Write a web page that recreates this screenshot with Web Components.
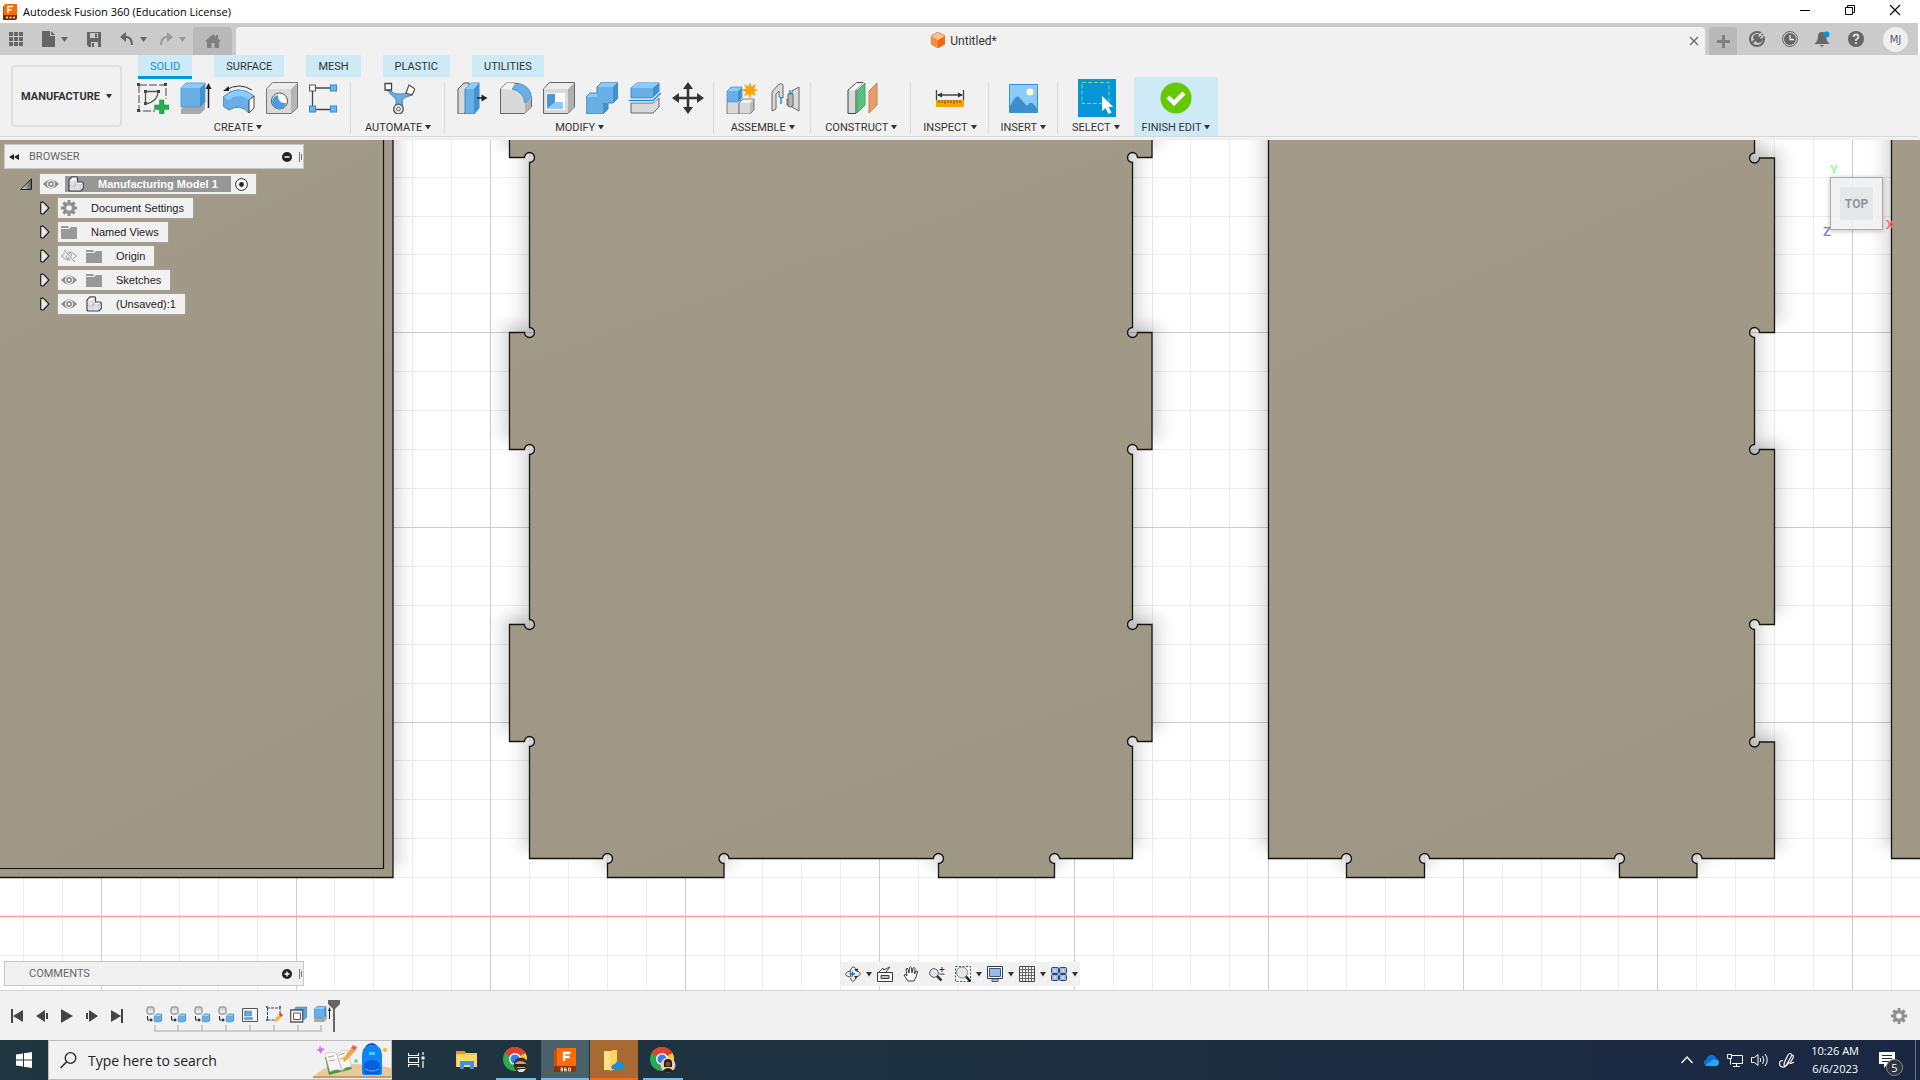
<!DOCTYPE html>
<html lang="en">
<head>
<meta charset="utf-8">
<title>Autodesk Fusion 360 (Education License)</title>
<style>
  html, body { margin: 0; height: 100%; overflow: hidden; }
  body { font-family: Roboto, "Liberation Sans", sans-serif; font-size: 11px; color: #333; }
</style>
</head>
<body>
<fusion-app></fusion-app>
<script>
const cube = (x, y, s, d, f = '#69aee5', t = '#8accff', r = '#4193cf', st = '#4a98d3') =>
  `<path d="M${x} ${y + d}h${s}v${s}h${-s}z" fill="${f}"/><path d="M${x} ${y + d}l${d} ${-d}h${s}l${-d} ${d}z" fill="${t}"/><path d="M${x + s} ${y + d}l${d} ${-d}v${s}l${-d} ${d}z" fill="${r}"/><path d="M${x} ${y + d}l${d} ${-d}h${s}v${s}l${-d} ${d}h${-s}z" fill="none" stroke="${st}" stroke-width=".8"/>`;
const sq = (x, y, c) => `<rect x="${x}" y="${y}" width="6" height="6" fill="${c}" stroke="${c === '#fff' ? '#555' : '#2f8bcf'}" stroke-width="1"/>`;
const chrome = (who) => `<circle cx="12" cy="12" r="12" fill="#2da94f"/><path d="M12 12L1.600 6A12 12 0 0 1 22.400 6z" fill="#e33e2f"/><path d="M12 12L22.400 6A12 12 0 0 1 12 24L17 14z" fill="#fcc934"/><path d="M12 6.500h10.600L22 5H8z" fill="#e33e2f"/><circle cx="12" cy="12" r="6" fill="#fff"/><circle cx="12" cy="12" r="4.600" fill="#3b7ded"/>${who}`;
const component = `<path d="M1 15V4L4 .8h4.500q1 0 1 1V6H14q1.500 0 1.500 1v5.500L13 15z" fill="#fff"/><path d="M1.500 4.500H6.500v5h-5zM1.500 10.500h5v4h-5zM8 9.500h4.500v5H8z" fill="#dde0e4"/><path d="M7 15V4.500L9.500 2M7 9h6l2.300-2M13 9v6M1 10h6M7 9l2.500-3" fill="none" stroke="#aab" stroke-width=".8"/><path d="M1 14.200V4L4 .8h4.500q1 0 1 1V6H14q1.300 0 1.300 1v5.500L13 15H1.800z" fill="none" stroke="#3f4550" stroke-width="1.200"/>`;
const eye = `<path d="M0 8Q8-1 16 8Q8 17 0 8z" fill="#8f8f8f"/><circle cx="8" cy="8" r="4" fill="#f1f1f1"/><circle cx="8" cy="8" r="2.900" fill="#8f8f8f"/><circle cx="8" cy="8" r="1.200" fill="#f1f1f1"/>`;
const gear = `<g fill="#8f8f8f"><path d="M6.500 0h3v16h-3z"/><path d="M6.500 0h3v16h-3z" transform="rotate(45 8 8)"/><path d="M6.500 0h3v16h-3z" transform="rotate(90 8 8)"/><path d="M6.500 0h3v16h-3z" transform="rotate(135 8 8)"/><circle cx="8" cy="8" r="6"/></g><circle cx="8" cy="8" r="2.800" fill="#f1f1f1"/>`;
const feature = `<rect x="1" y="1" width="7" height="7" rx="1.500" fill="#e8e8e8" stroke="#777"/><path d="M1 3h7" stroke="#999" stroke-width=".6"/><path d="M1.500 10v4h4" fill="none" stroke="#222"/><path d="M4.500 12l2.500 2-2.500 2z" fill="#222"/>` + cube(8.500, 8, 6, 1.800);

const ICONS = {
  fusion: [14, 16, `<path d="M1 2q0-2 2-2h11v11H1z" fill="#ff6b00"/><path d="M0 3l1-2v10H0z" fill="#c44a00"/><path d="M0 11h14v3q0 2-2 2H0z" fill="#7b2c05"/><path d="M5 9V2.500h5M5 5.700h4" stroke="#fff" stroke-width="1.600" fill="none"/><path d="M3 13.500h2M6.500 13.500h2M10 13.500h2" stroke="#fff" stroke-width="1.300"/>`],
  min: [12, 12, `<path d="M1 6.500h10" stroke="#000"/>`],
  restore: [12, 12, `<path d="M1.500 3.500h7v7h-7zM3.500 3V1.500h7v7H9" fill="none" stroke="#000"/>`],
  close: [12, 12, `<path d="M1 1l10 10M11 1L1 11" stroke="#000" stroke-width="1.100"/>`],
  tabx: [12, 12, `<path d="M2 2l8 8M10 2l-8 8" stroke="#666" stroke-width="1.300"/>`],
  apps: [14, 14, `<path d="M0 0h4v4H0zM5 0h4v4H5zM10 0h4v4h-4zM0 5h4v4H0zM5 5h4v4H5zM10 5h4v4h-4zM0 10h4v4H0zM5 10h4v4H5zM10 10h4v4h-4z" fill="#666"/>`],
  file: [13, 16, `<path d="M0 0h8v5h5v11H0zM9 0l4 4H9z" fill="#666"/>`],
  save: [14, 15, `<path d="M0 0h14v15H2l-2-2z" fill="#666"/><path d="M3 1h8v6H3zM4 10h7v5H4z" fill="#cbcbcb"/><path d="M9 1.500v4" stroke="#666" stroke-width="2"/><path d="M6 11v4" stroke="#666" stroke-width="2"/><path d="M3 6.500h8" stroke="#666"/>`],
  undo: [14, 14, `<path d="M1 5h6q5 1 5 8" fill="none" stroke="#666" stroke-width="2"/><path d="M0 5l6-5v10z" fill="#666"/>`],
  redo: [14, 14, `<path d="M13 5H7q-5 1-5 8" fill="none" stroke="#999" stroke-width="2"/><path d="M14 5L8 0v10z" fill="#999"/>`],
  home: [16, 14, `<path d="M8 0L0 7.500h2V14h4.500V9h3v5H14V7.500h2L13 4.500V1h-2v2z" fill="#808080"/>`],
  down: [7, 5, `<path d="M0 0h7L3.500 5z" fill="#666"/>`],
  downl: [7, 5, `<path d="M0 0h7L3.500 5z" fill="#999"/>`],
  downk: [6, 5, `<path d="M0 0h6L3 4.500z" fill="#333"/>`],
  model: [14, 16, `<path d="M7 0l7 4-7 4-7-4z" fill="#ffc093"/><path d="M0 4l7 4v8l-7-4z" fill="#ff8b3d"/><path d="M14 4L7 8v8l7-4z" fill="#f96800"/><path d="M7 0l7 4v8l-7 4-7-4V4z" fill="none" stroke="#c9793f" stroke-width=".8"/>`],
  plus: [13, 13, `<path d="M6.500 0v13M0 6.500h13" stroke="#808080" stroke-width="3"/>`],
  extensions: [16, 16, `<circle cx="8" cy="8" r="7" fill="none" stroke="#666" stroke-width="2"/><path d="M2 13l4-4M5 7l4 4q4 0 4-4L9 4Q5 4 5 7z" stroke="#666" stroke-width="1.800" fill="#666"/><path d="M9.500 5.500L15 0M11.500 7.500L16 3" stroke="#cbcbcb" stroke-width="1.600"/>`],
  clock: [16, 16, `<circle cx="8" cy="8" r="7.500" fill="none" stroke="#666"/><circle cx="8" cy="8" r="6" fill="#666"/><path d="M8 4v4.500h4" fill="none" stroke="#eee" stroke-width="1.300"/>`],
  bell: [16, 16, `<path d="M7 1q4 0 4 4 0 5 3 7v1H0v-1q3-2 3-7 0-4 4-4zM5 14h4l-2 2z" fill="#666"/><circle cx="11.500" cy="3.500" r="3" fill="#0696d7"/>`],
  help: [16, 16, `<circle cx="8" cy="8" r="8" fill="#666"/><path d="M5.500 6q0-2.500 2.500-2.500T10.500 6Q10.500 7.500 8 8.500V10" fill="none" stroke="#ddd" stroke-width="1.800"/><path d="M7 11.300h2v1.800H7z" fill="#ddd"/>`],
  sketch: [32, 32, `<g fill="none" stroke="#444" stroke-dasharray="8 2"><path d="M2 3h27v14M2 3v26h16" /></g><g fill="#444"><path d="M0 1h3v3H0zM27 1h3v3h-3zM0 27h3v3H0zM7 8h3v3H7zM20 8h3v3h-3zM7 20h3v3H7z"/></g><path d="M9 9.500h11M8.500 10v11M21 10q0 9-12 12" fill="none" stroke="#555" stroke-width="1.300"/><path d="M22.500 18h4.500v5h5v4.500h-5V32h-4.500v-4.500h-5V23h5z" fill="#27ae4e" stroke="#14883a" stroke-width=".5"/>`],
  extrude: [32, 32, `<path d="M1 27l4-3h16l4-5v8l-5 5H1z" fill="#a8a8a8"/>` + cube(1, 1, 19, 5) + `<path d="M28.500 5v21" stroke="#222" stroke-width="1.500"/><path d="M28.500 1l3 6h-6z" fill="#222"/>`],
  revolve: [32, 32, `<path d="M0 15q15-14 31-1l-5 4v13q-9-10-20-3L0 24z" fill="#69aee5" stroke="#3b88c4"/><path d="M1 15q14-13 29-1l-4 4Q16 10 6 18z" fill="#8accff"/><path d="M26 18l5-4v12l-5 5z" fill="#fff" stroke="#444"/><path d="M3 8q13-8 26 0" fill="none" stroke="#333"/><path d="M0 9l6-5v5z" fill="#222"/>`],
  hole: [32, 32, `<path d="M0 7l6-6h25v25l-6 6H0z" fill="#d9d9d9"/><path d="M25 7l6-6v25l-6 6z" fill="#b5b5b5"/><path d="M0 7l6-6h25l-6 6z" fill="#ececec"/><path d="M.5 7l6-6.500h25V26L25 31.500H.5z" fill="none" stroke="#777"/><circle cx="13.500" cy="19" r="8" fill="#fff" stroke="#555"/><path d="M12 13a7 7 0 1 0 8 8q-8 1-8-8z" fill="#4a9ddd"/>`],
  pattern: [32, 32, `<path d="M7 6h16M3.500 9v16M7 27.500h16" stroke="#444" stroke-width="1.300"/>` + sq(.5, 3, '#fff') + sq(21.500, 3, '#69b7f2') + sq(.5, 24, '#69b7f2') + sq(21.500, 24, '#69b7f2')],
  automate: [32, 32, `<path d="M4 5q6 8 12 7 6 1 10-3l3 4q-8 2-10 5l1 9q0 5-5 5t-4-5q3-6 2-10Q9 14 4 8z" fill="#69aee5" stroke="#3984bd"/><path d="M2 1.500h6.500V8H2z" fill="#fff" stroke="#444" stroke-width="1.300"/><path d="M26 3l6 4-3 6-6-2z" fill="#fff" stroke="#555" stroke-width="1.300"/><circle cx="15.500" cy="27" r="4.800" fill="#e6e6e6" stroke="#555" stroke-width="1.300"/><circle cx="15.500" cy="27" r="1.800" fill="#fff" stroke="#555"/>`],
  presspull: [32, 32, `<path d="M1 7l6-6h5v25l-5 6H1z" fill="#d9d9d9" stroke="#555"/><path d="M8 7l6-6h8v25l-5 6H8z" fill="#69aee5" stroke="#3d87c2"/><path d="M8 7l6-6h8l-5 6z" fill="#8accff"/><path d="M17 7l5-6v25l-5 6z" fill="#4193cf"/><path d="M20 16h6" stroke="#222" stroke-width="1.500"/><path d="M24.500 12.500l6 3.500-6 3.500z" fill="#222"/>`],
  fillet: [32, 32, `<path d="M.5 7l6-6h8Q30 3 31.500 17v8l-7 6.500H.5z" fill="#d9d9d9" stroke="#666"/><path d="M1 7l6-6h7l-2 7z" fill="#f2f2f2"/><path d="M12 6q13 4 13 17v8l6-6v-7z" fill="#b5b5b5"/><path d="M12 7l5-6Q30 3 31.500 15L25 21Q23 9 12 7z" fill="#69aee5" stroke="#3d87c2" stroke-width=".7"/>`],
  shell: [32, 32, `<path d="M.5 7l6-6.500h25V25L25 31.500H.5z" fill="#d9d9d9" stroke="#666"/><path d="M25 7l6-6v24l-6 6z" fill="#b0b0b0"/><path d="M1 7l6-6h24l-6 6z" fill="#ececec"/><path d="M3 11h19v17H3z" fill="#fff"/><path d="M4 12h8v9l-8 6z" fill="#4a98d3"/><path d="M12 20h8v7H4z" fill="#8accff"/>`],
  combine: [32, 32, `<path d="M0 15l4-4h7V5l5-5h16v16l-5 5h-5v6l-5 5H0z" fill="#69aee5"/><path d="M0 15l4-4h7v4zM11 5l5-5h16l-5 5z" fill="#8accff"/><path d="M27 5l5-5v16l-5 5zM17 21h5v6l-5 5z" fill="#4193cf"/><path d="M0 15l4-4h7V5l5-5h16v16l-5 5h-5v6l-5 5H0z" fill="none" stroke="#3d87c2"/>`],
  split: [32, 32, `<path d="M2 6l6-5h22v9l-6 6H2z" fill="#69aee5" stroke="#3d87c2"/><path d="M2 6l6-5h22l-6 5z" fill="#8accff"/><path d="M24 6l6-5v9l-6 6z" fill="#4193cf"/><path d="M2 21h22l6-5v9l-6 6H2z" fill="#d9d9d9" stroke="#666"/><path d="M0 18.500h24l7-7" fill="none" stroke="#fff" stroke-width="3.500"/><path d="M0 18.500h24l8-7.500" fill="none" stroke="#0d87e0" stroke-width="1.500"/>`],
  move: [32, 32, `<path d="M16 5v22M5 16h22" stroke="#333" stroke-width="2.500"/><path d="M16 0l5 7H11zM16 32l5-7H11zM0 16l7-5v10zM32 16l-7-5v10z" fill="#333"/>`],
  newcomp: [32, 32, cube(1, 18, 11, 3, '#d9d9d9', '#eee', '#bbb', '#666') + cube(13, 17, 11, 4, '#d9d9d9', '#f2f2f2', '#bbb', '#666') + cube(1, 5, 11, 4) + `<path d="M24 0l1.500 4.500L30 2l-2 4.500 4 1.500-4 2 2 4-4.500-2L24 17l-2-5-4 2.500 2-4.500-5-2 5-1.500L18 2l4.500 2.500z" fill="#fba50a"/>`],
  joint: [32, 32, `<path d="M3 10l6-7q5-3 5 1v12l-4-1V9l-3 3v15l-4 2z" fill="#d9d9d9" stroke="#666"/><path d="M30 5l-7 4v9l-5-1v6l5 2 7 4z" fill="#d9d9d9" stroke="#666"/><path d="M19 12q3-2 5 0v12q-3 2-5 0z" fill="#b5b5b5" stroke="#666"/><path d="M12 15v7M21 8v5" stroke="#0696f7" stroke-width="1.500"/>`],
  construct: [32, 32, `<path d="M2 8l9-7.500h6L10 8v23.500H2z" fill="#d9d9d9" stroke="#444"/><path d="M3 8l8-7h6l-7 7z" fill="#fff"/><path d="M11 9l8-8v22l-8 8z" fill="#57c27c" stroke="#3da360"/><path d="M23 9l8-8v22l-8 8z" fill="#e69d69" stroke="#ce7f48"/>`],
  inspect: [32, 32, `<path d="M2.500 8v10M29.500 8v10M4 13h24" stroke="#444" stroke-width="1.300" fill="none"/><path d="M3 13l5-2.500v5zM29 13l-5-2.500v5z" fill="#333"/><path d="M2 18h28v7H2z" fill="#f6a400"/><path d="M5 18v3M8 18v3M11 18v4M14 18v3M17 18v3M20 18v4M23 18v3M26 18v3" stroke="#555"/>`],
  insert: [32, 32, `<path d="M2.500 2.500h28v28h-28z" fill="#8accff" stroke="#3d8fcb"/><path d="M3 24q6-12 9-9 5 6 8 9 3-4 5-3 3 2 5 6v3H3z" fill="#3d8fcb"/><circle cx="23" cy="10" r="3.500" fill="#ffffd0"/>`],
  select: [38, 38, `<path d="M0 0h38v38H0z" fill="#0696d7"/><path d="M4 3.500h27v21H4z" fill="none" stroke="#6fe08c" stroke-dasharray="4 2"/><path d="M24 17v15l3.500-3 3 6 3-1.500-3-5.500h5z" fill="#fff"/>`],
  finish: [32, 32, `<circle cx="16" cy="16" r="15.500" fill="#66c803"/><path d="M8 15l6 6 10-10" fill="none" stroke="#fff" stroke-width="4.500"/>`],
  rewind: [10, 6, `<path d="M0 3l5-3v6zM5 3l5-3v6z" fill="#222"/>`],
  minus: [10, 10, `<circle cx="5" cy="5" r="5" fill="#222"/><path d="M2.500 5h5" stroke="#fff" stroke-width="1.500"/>`],
  add: [10, 10, `<circle cx="5" cy="5" r="5" fill="#222"/><path d="M2.500 5h5M5 2.500v5" stroke="#fff" stroke-width="1.300"/>`],
  grip: [3, 12, `<path d="M.5 1v10M2.500 3v6" stroke="#777"/>`],
  openarrow: [12, 12, `<defs><linearGradient id="g"><stop stop-color="#eee"/><stop offset="1" stop-color="#555"/></linearGradient></defs><path d="M11.500 .8v10.700H.8z" fill="url(#g)" stroke="#222"/>`],
  shutarrow: [10, 14, `<path d="M.7 1.500v11q2.500 1 3 0L9 7 3.700 1.500q-1.500-1-3 0z" fill="#e8e8ea" stroke="#2a2a2a" stroke-width="1.300"/>`],
  eye: [16, 16, eye],
  eyeoff: [16, 16, `<path d="M.5 8Q8 0 15.500 8 8 16 .5 8z" fill="none" stroke="#9a9a9a"/><circle cx="8" cy="8" r="2.700" fill="none" stroke="#9a9a9a"/><path d="M2 1.500l12.500 13" stroke="#f1f1f1" stroke-width="3"/><path d="M3 2l11 12" stroke="#8a8a8a"/>`],
  folder: [16, 13, `<path d="M0 0h7l1 2H0zM0 3h8l2-2h6v12H0z" fill="#999"/>`],
  component: [16, 16, component],
  gear: [16, 16, gear],
  active: [13, 13, `<circle cx="6.500" cy="6.500" r="5.900" fill="#fff" stroke="#222"/><circle cx="6.500" cy="6.500" r="2.400" fill="#222"/>`],
  orbit: [16, 16, `<path d="M6 11.500Q4.500 8 5.500 4 7 0 9 1q2 1 2 3M11 10q-.5 5-3 5.500Q6 15 5.500 12" fill="none" stroke="#555"/><path d="M5 11Q0 10 .5 8 2 5 5 5M10 4.500q5.500 1 5.500 3.500-.5 2-5 3" fill="none" stroke="#555"/><path d="M7.500 5.500v5M5 8h5" stroke="#0d74d8" stroke-width="1.300"/><path d="M9 3.500l4-1v3zM9 10l4 0-2 3z" fill="#333"/>`],
  look: [16, 16, `<path d="M.5 6.500h15v9H.5z" fill="#fff" stroke="#333a48"/><path d="M4 9.500h8v3H4z" fill="#bbc" stroke="#333a48"/><path d="M2 6l4-4 .5 2L13 1l-4 5" fill="none" stroke="#445"/>`],
  hand: [16, 16, `<path d="M5 15L1 9q1-2 3 1L3 3q1-1.500 2 0l1 4L6.500 1.500q1-1.500 1.800 0L9 7l1-5q1.500-1 2 .5L11.500 8 13 5q1.500-.5 1.500 1L13 11l-2 4z" fill="#fff" stroke="#333a48"/>`],
  zoom: [16, 16, `<circle cx="5" cy="7" r="4.300" fill="#dcebed" stroke="#556"/><path d="M8 10l4.500 4.500" stroke="#333" stroke-width="2.500"/><path d="M13 1v5M10.500 3.500h5M10.500 8h5" stroke="#333"/>`],
  zoomwin: [16, 16, `<path d="M.5 .5h15v15H.5z" fill="none" stroke="#555" stroke-dasharray="2 1.500"/><circle cx="7" cy="6.500" r="5.500" fill="#dcebe9" stroke="#889"/><path d="M11 10.500l4.500 5" stroke="#222" stroke-width="2.500"/>`],
  display: [16, 16, `<path d="M.5 .5h15v12H.5z" fill="#fff" stroke="#333a48"/><path d="M2.500 2.500h11v8h-11z" fill="#9dbae4" stroke="#345898"/><path d="M5 13h6v2.500H5z" fill="#ccd" stroke="#556"/>`],
  grid: [16, 16, `<path d="M.5 .5h15v15H.5z" fill="#fff" stroke="#444"/><path d="M3.500 1v14M6.500 1v14M9.500 1v14M12.500 1v14M1 3.500h14M1 6.500h14M1 9.500h14M1 12.500h14" stroke="#667"/>`],
  views: [16, 14, `<g fill="#9dbae4" stroke="#2c436e"><rect x=".5" y=".5" width="7" height="6" rx="1"/><rect x="8.500" y=".5" width="7" height="6" rx="1"/><rect x=".5" y="7.500" width="7" height="6" rx="1"/><rect x="8.500" y="7.500" width="7" height="6" rx="1"/></g><path d="M3 2.500h2v2H3zM11 2.500h2v2h-2zM3 9.500h2v2H3zM11 9.500h2v2h-2z" fill="#d5e2f6"/>`],
  first: [12, 14, `<path d="M0 0h2v14H0zM12 1v12L2 7z" fill="#444"/>`],
  back: [12, 14, `<path d="M9 1v12L0 7zM10 4h2v6h-2z" fill="#444"/>`],
  play: [12, 14, `<path d="M0 0l12 7-12 7z" fill="#444"/>`],
  fwd: [12, 14, `<path d="M3 1v12l9-6zM0 4h2v6H0z" fill="#444"/>`],
  last: [12, 14, `<path d="M10 0h2v14h-2zM0 1v12l10-6z" fill="#444"/>`],
  feature: [16, 17, feature],
  arrange: [16, 16, `<path d="M.5 1.500h15v13H.5z" fill="#f4f4f4" stroke="#555"/><path d="M2.500 4h3v5h-3zM6.500 4h3v5h-3zM2.500 10.500h8v2h-8z" fill="#5aa6e0" stroke="#3a86c0" stroke-width=".5"/>`],
  editsk: [17, 17, `<path d="M1 2h13v6M1.500 2v12h7" fill="none" stroke="#444" stroke-dasharray="3 1"/><path d="M0 0h2v2H0zM13 0h2v2h-2zM0 13h2v2H0z" fill="#0d87e0"/><path d="M8 16l1.500-4 4-4 2.500 2.500-4.500 4.500z" fill="#f3b53f"/><path d="M13 8.500L15 7l2 2-1.500 2z" fill="#d84b3c"/>`],
  offset: [17, 17, `<path d="M4 4l2-3h11v10l-3 3z" fill="#5aa6e0" stroke="#3a7fb8" stroke-width=".5"/><path d="M.7 4h12v12H.7z" fill="#fff" stroke="#555" stroke-width="1.300"/><path d="M3.500 7h7v6.500h-7z" fill="#fff" stroke="#555"/>`],
  extr: [17, 17, `<path d="M0 13l2-1h8l3-4v5l-3 3H0z" fill="#aaa"/>` + cube(.5, .5, 9, 2.500) + `<path d="M15.500 4v9" stroke="#222"/><path d="M15.500 1l1.500 4h-3z" fill="#222"/>`],
  marker: [12, 32, `<path d="M0 0h12v4L7 9v23H5V9L0 4z" fill="#666"/>`],
  win: [16, 16, `<path d="M0 2.500l7-1v6H0zM8 1.300l8-1.300v7.500H8zM0 8.500h7v6l-7-1zM8 8.500h8V16l-8-1.300z" fill="#fff"/>`],
  search: [17, 17, `<circle cx="10.500" cy="6" r="5.300" fill="none" stroke="#222" stroke-width="1.300"/><path d="M6.500 10L.5 16" stroke="#222" stroke-width="1.500"/>`],
  books: [78, 36, `<path d="M0 36Q12 20 42 22t36 4v10z" fill="#e9c99c"/><path d="M0 34h78v2H0z" fill="#c99a63"/><path d="M12 15l20-5 7 17-23 6z" fill="#3f9c4b"/><path d="M12 12q7-4 12 0l5 17q-6-3-12 1zM24 12q5-5 10-4l5 17q-6-1-10 4z" fill="#f7f4f2" stroke="#aaa" stroke-width=".5"/><path d="M15 15l6-1M16 19l6-1M26 13l6-2M27 17l6-2" stroke="#aaa"/><path d="M31 20l-1-3L38 6l4 3-8 9z" fill="#f6a93d"/><path d="M38 6l2-3 4 2-2 4z" fill="#e8634f"/><path d="M7 3l1 3 4 1-3 2-1 3-2-3-3-1 3-1z" fill="#d86cf0"/><circle cx="43" cy="19" r="2" fill="#5fd3e8"/><circle cx="72" cy="8" r="2" fill="#f8b21c"/><path d="M53 5q6-6 11 0" fill="none" stroke="#0a55c8" stroke-width="2"/><path d="M49 14q0-11 10-11t10 11v17q0 2-3 2H52q-3 0-3-2z" fill="#1184f5"/><path d="M51 24q0-6 8-6t8 6v6q0 2-2 2H53q-2 0-2-2z" fill="#0b5edb"/><path d="M52 27q7 4 14 0" fill="none" stroke="#57b9ff"/><path d="M56 10h6v3h-6z" fill="#36d0ff"/>`],
  taskview: [17, 16, `<path d="M.5 1v2.500h10V1M.5 15v-2.500h10V15M.5 5.500h10v5H.5zM15 0v3M15 9v7" fill="none" stroke="#fff" stroke-width="1.200"/><path d="M13.500 4.500h3v3h-3z" fill="#fff"/>`],
  explorer: [22, 18, `<path d="M0 1q0-1 1-1h7l2 2h11v14H0z" fill="#f6c74c"/><path d="M0 0h9v3H0z" fill="#d9a011"/><path d="M1 4h20v12H1z" fill="#ffd867"/><path d="M4 10h14v8h-4v-4H8v4H4z" fill="#3a93dc"/>`],
  chromea: [26, 26, chrome(`<circle cx="18" cy="18" r="7.500" fill="#3a322a"/><path d="M12 16q5-4 11 0l-1 5h-8z" fill="#c99f6f"/><path d="M12 17h11v3H12z" fill="#222"/><path d="M14 23l4-1 5 0-3 3h-4z" fill="#ddd"/>`)],
  chromeb: [26, 26, chrome(`<circle cx="18" cy="18" r="7.500" fill="#e6cfb4"/><path d="M14 16q0-4 4-4t4 4v4h-8z" fill="#2a1d18"/><circle cx="18" cy="17" r="2.500" fill="#7a4a35"/><path d="M12.500 24q5.500-6 11 0-5.500 3-11 0z" fill="#222"/>`)],
  fusionbig: [22, 24, `<path d="M1 3l2-3h19v18H1z" fill="#ff6b00"/><path d="M0 3l3-3v18H0z" fill="#c9510a"/><path d="M0 18h22v4q0 2-2 2H0z" fill="#8a3508"/><path d="M10 13V5h6.500M10 9h5.500" stroke="#fff" stroke-width="2.300" fill="none"/><path d="M6.500 20h2v3h-2M6.500 21.500h2M12.500 20h-2v3h2v-1.500h-2M14.500 20h2v3h-2z" stroke="#fff" stroke-width=".8" fill="none"/>`],
  odfolder: [21, 21, `<path d="M0 1h9v19H0z" fill="#ffe28a"/><path d="M9 0h4v18l-7 3V3z" fill="#ffd45e"/><path d="M8 19q-2-4 3-5 2-4 6-2 2 1 2 3 3 1 1 4z" fill="#1490df"/>`],
  chev: [12, 8, `<path d="M.5 7l5.500-6 5.500 6" fill="none" stroke="#fff" stroke-width="1.300"/>`],
  cloud: [16, 11, `<path d="M2 10q-3-4 1-5 2-6 7-5 3 1 4 4 3 1 2 4z" fill="#0f6fd0"/><path d="M2 10.500l8-6q6 0 6 3.500-.5 3-3 3H4z" fill="#28a8ea"/>`],
  net: [16, 13, `<path d="M5 1.500h10.500v8H5M3.500 5v5.500M.5 .5h4v4h-4zM6 12.500h7M9.500 10v2" fill="none" stroke="#fff"/>`],
  sound: [17, 14, `<path d="M.5 4.500h3l3.500-3v11l-3.500-3h-3z" fill="none" stroke="#fff"/><path d="M9 5q1.500 2 0 4M11.500 3q3 4 0 8M14 1q4.500 6 0 12" fill="none" stroke="#fff"/>`],
  pen: [16, 16, `<path d="M4 9q-3-1-3.500 2T3 15q3 1 5-3l5-9q-2-3-4 0L6 9q-2 5 0 5t4-4M13 3q2 0 1 3l-3 5q1 1 4-1" fill="none" stroke="#fff" stroke-width="1.200"/>`],
  note: [16, 16, `<path d="M0 0h16v12H9l-4 4v-4H0z" fill="#fff"/><path d="M3 3.500h10M3 6.500h10M3 9.500h7" stroke="#1a2a42"/>`]
};

const svg = (n) => { const [w, h, body] = ICONS[n]; return `<svg width="${w}" height="${h}" viewBox="0 0 ${w} ${h}" aria-hidden="true">${body}</svg>`; };

class Base extends HTMLElement {
  connectedCallback() {
    if (this.shadowRoot) return;
    this.attachShadow({ mode: 'open' }).innerHTML =
      `<style>*{box-sizing:border-box}svg{display:block;flex:none}button{font:inherit;color:inherit;background:none;border:0;margin:0;padding:0;display:flex;align-items:center;justify-content:center}${this.css()}</style>${this.html()}`;
  }
}
const define = (name, css, html) => customElements.define(name, class extends Base {
  css() { return typeof css === 'function' ? css(this) : css; }
  html() { return typeof html === 'function' ? html(this) : html; }
});

define('title-bar', `
  :host{display:flex;height:23px;background:#fff;color:#000;align-items:center;padding:0 19px 0 3px;font:11px/20px "Open Sans","Noto Sans",sans-serif}
  .t{flex:1;padding-left:6px}
  .w{display:flex;gap:33px;padding-bottom:3px}`,
  `${svg('fusion')}<span class="t"><slot></slot></span><div class="w">
   <button aria-label="Minimize">${svg('min')}</button><button aria-label="Restore">${svg('restore')}</button><button aria-label="Close">${svg('close')}</button></div>`);

define('tab-bar', `
  :host{display:flex;height:32px;background:#cbcbcb;border-right:2px solid #fff;padding-left:9px}
  .q{display:flex;align-items:center;width:184px;height:30px;padding-top:2px}
  .q button+button{margin-left:19px}.q button{gap:6px}.q button:last-child{margin-left:12px}
  .h{width:39px;margin:4px 4px 0 0;background:#b9b9b9;border-radius:4px 4px 0 0}
  .d{flex:1;display:flex;align-items:center;margin-top:4px;background:#f1f1f1;border-radius:4px 4px 0 0;font-size:12px}
  .d .n{flex:1;display:flex;gap:5px;align-items:center;justify-content:center;padding-left:10px}
  .d button{width:23px}
  .n svg{margin-bottom:2px}
  .p{width:28px;margin:4px 12px 0 4px;background:#b9b9b9;border-radius:4px 4px 0 0}
  .r{display:flex;align-items:center;gap:17px;padding:0 10px 0 0}
  .av{width:25px;height:25px;border-radius:50%;background:#efefef;margin-left:2px;color:#4a5a74;font:10px/25px "DejaVu Sans",sans-serif}`,
  `<div class="q"><button aria-label="Data panel">${svg('apps')}</button><button aria-label="File">${svg('file')}${svg('down')}</button><button aria-label="Save">${svg('save')}</button><button aria-label="Undo">${svg('undo')}${svg('down')}</button><button aria-label="Redo">${svg('redo')}${svg('downl')}</button></div>
   <button class="h" aria-label="Home">${svg('home')}</button>
   <div class="d"><span class="n">${svg('model')}<slot></slot></span><button aria-label="Close tab">${svg('tabx')}</button></div>
   <button class="p" aria-label="New tab">${svg('plus')}</button>
   <div class="r"><button aria-label="Extensions">${svg('extensions')}</button><button aria-label="Job status">${svg('clock')}</button><button aria-label="Notifications">${svg('bell')}</button><button aria-label="Help">${svg('help')}</button><button class="av">MJ</button></div>`);

define('ribbon-tab', `
  :host{display:block}
  button{height:22px;padding:1px 12px 0;background:#cdeaf6;font-size:11px;line-height:21px}
  :host([active]) button{height:24px;color:#0696d7;border-bottom:3px solid #0696d7;padding-top:2px}`,
  `<button><slot></slot></button>`);

define('tool-group', `
  :host{display:flex;flex-direction:column;align-items:center;height:59px;position:relative}
  :host([sep])::after{content:"";position:absolute;right:0;top:5px;width:1px;height:51px;background:#d9d9d9}
  :host([primary]){background:#cdeaf6}
  .i{display:flex;gap:11px;margin:0 10px 0 12px;height:42px;align-items:center}
  .i button{width:32px;height:38px}
  .l{height:17px;margin:0 14px;gap:3px;line-height:17px;white-space:nowrap}
  :host([compact]) .l{margin:0 12px}
  :host([compact]) .i,:host([primary]) .i{margin:0 11px}
  :host([primary]) .l{margin:0 8px}`,
  (e) => `<div class="i">${e.getAttribute('icons').split(' ').map((n) => `<button aria-label="${n}">${svg(n)}</button>`).join('')}</div><button class="l"><slot></slot>${svg('downk')}</button>`);

define('tool-ribbon', `
  :host{display:flex;height:85px;background:#f1f1f1;padding-left:11px;position:relative;color:#333}
  :host::after{content:"";position:absolute;left:0;right:2px;bottom:3px;height:1px;background:#d9d9d9}
  .ws{width:111px;height:62px;margin:10px 3px 0 0;border:2px solid #dedede;border-radius:4px;font-weight:700;gap:6px}
  .c{display:flex;flex-direction:column;z-index:1}
  .tabs{display:flex;gap:22px;height:22px;padding-left:13px}
  .g{display:flex}`,
  `<button class="ws">MANUFACTURE ${svg('downk')}</button>
   <div class="c"><div class="tabs"><ribbon-tab active>SOLID</ribbon-tab><ribbon-tab>SURFACE</ribbon-tab><ribbon-tab>MESH</ribbon-tab><ribbon-tab>PLASTIC</ribbon-tab><ribbon-tab>UTILITIES</ribbon-tab></div>
   <div class="g"><tool-group sep icons="sketch extrude revolve hole pattern">CREATE</tool-group><tool-group sep icons="automate">AUTOMATE</tool-group><tool-group sep icons="presspull fillet shell combine split move">MODIFY</tool-group><tool-group sep icons="newcomp joint">ASSEMBLE</tool-group><tool-group sep icons="construct">CONSTRUCT</tool-group><tool-group sep compact icons="inspect">INSPECT</tool-group><tool-group sep compact icons="insert">INSERT</tool-group><tool-group icons="select">SELECT</tool-group><tool-group primary icons="finish">FINISH EDIT</tool-group></div></div>`);

/* Part outlines run clockwise; a third entry marks a corner relieved by a round dog-bone cut. */
const outline = (pts, r = 5) => pts.map(([x, y, n], i) => {
  if (!n) return `${i ? 'L' : 'M'}${x} ${y}`;
  const p = pts[i - 1], q = pts[(i + 1) % pts.length];
  const a = [x + Math.sign(p[0] - x) * r, y + Math.sign(p[1] - y) * r];
  const b = [x + Math.sign(q[0] - x) * r, y + Math.sign(q[1] - y) * r];
  return `L${a}A${r} ${r} 0 1 0 ${b}`;
}).join('') + 'Z';
const middle = outline([[509.5, 120], [1152, 120], [1152, 157.5], [1132.5, 157.5, 1], [1132.5, 332.5, 1], [1152, 332.5], [1152, 449.5], [1132.5, 449.5, 1], [1132.5, 624.5, 1], [1152, 624.5], [1152, 741.5], [1132.5, 741.5, 1], [1132.5, 858.5], [1054.5, 858.5, 1], [1054.5, 877.5], [938.5, 877.5], [938.5, 858.5, 1], [724, 858.5, 1], [724, 877.5], [607.5, 877.5], [607.5, 858.5, 1], [529.5, 858.5], [529.5, 741.5, 1], [509.5, 741.5], [509.5, 624.5], [529.5, 624.5, 1], [529.5, 449.5, 1], [509.5, 449.5], [509.5, 332.5], [529.5, 332.5, 1], [529.5, 157.5, 1], [509.5, 157.5]]);
const right = outline([[1268.5, 120], [1754.5, 120], [1754.5, 158, 1], [1774.5, 158], [1774.5, 332.5], [1754.5, 332.5, 1], [1754.5, 449.5, 1], [1774.5, 449.5], [1774.5, 624.5], [1754.5, 624.5, 1], [1754.5, 742, 1], [1774.5, 742], [1774.5, 858.5], [1697, 858.5, 1], [1697, 877.5], [1619.5, 877.5], [1619.5, 858.5, 1], [1424.5, 858.5, 1], [1424.5, 877.5], [1346.5, 877.5], [1346.5, 858.5, 1], [1268.5, 858.5]]);
const parts = ['M-40 120H393V877.5H-40Z', middle, right, 'M1891.5 120H4000V858.5H1891.5Z'];
const gridLines = () => {
  let minor = '', major = '';
  for (let i = -13; i < 100; i++) { const x = Math.floor(490.6 + i * 38.91) + .5; if (i % 5) minor += `M${x} 0V3000`; else major += `M${x} 0V3000`; }
  for (let i = -20; i < 60; i++) { if (!i) continue; const y = Math.round(916.1 + i * 38.92) + .5; if (i % 5) minor += `M0 ${y}H4000`; else major += `M0 ${y}H4000`; }
  return `<path d="${minor}" stroke="#ececec"/><path d="${major}" stroke="#cdcdcd"/><path d="M0 916.5H4000" stroke="#ff9c9c" stroke-width="1.5"/>`;
};
define('model-canvas', `
  :host{display:block;position:relative;overflow:hidden;background:#fff;flex:1;min-height:0}
  svg{position:absolute;inset:0;width:100%;height:100%}
  .tl,.bl,.nav,.vc{position:absolute}
  .tl{left:4px;top:4px}.bl{left:4px;bottom:4px}.nav{left:0;right:0;bottom:4px;display:flex;justify-content:center}.vc{right:26px;top:20px}`,
  () => `<svg><defs><filter id="b" x="-10%" y="-10%" width="120%" height="120%"><feGaussianBlur stdDeviation="12 7"/></filter>
   <linearGradient id="m" x1="0" y1="0" x2=".3" y2="1"><stop stop-color="#a39b8a"/><stop offset="1" stop-color="#9e9786"/></linearGradient></defs>
   <g transform="translate(0 -140)" fill="none">${gridLines()}
   <g fill="#000" opacity=".28" filter="url(#b)" transform="translate(0 -9)">${parts.map((d) => `<path d="${d}"/>`).join('')}</g>
   <g fill="url(#m)" stroke="#16140f" stroke-width="1.300">${parts.map((d) => `<path d="${d}"/>`).join('')}</g>
   <path d="M383.5 120V868.5H-10" stroke="#16140f" stroke-width="1.200"/></g></svg>
   <div class="tl"><browser-panel></browser-panel></div><view-cube class="vc"></view-cube>
   <div class="bl"><panel-head icon="add" indent>COMMENTS</panel-head></div><div class="nav"><nav-bar></nav-bar></div>`);

define('panel-head', `
  :host{display:flex;align-items:center;width:300px;height:25px;background:#f1f1f1;border:1px solid #c6c6c6;color:#666;padding:0 1px 0 4px;box-sizing:border-box}
  .lead{width:20px}.t{flex:1;line-height:20px}.g{margin-left:7px}`,
  (e) => `<span class="lead">${e.hasAttribute('indent') ? '' : svg('rewind')}</span><span class="t"><slot></slot></span><button aria-label="Toggle panel">${svg(e.getAttribute('icon'))}</button><span class="g">${svg('grip')}</span>`);

define('tree-row', `
  :host{display:flex;align-items:center;height:20px;padding-left:36px;font:11px/16px "Liberation Sans",Arial,sans-serif;color:#222}
  :host([root]){padding-left:16px}
  .a{width:18px;justify-content:flex-start}:host([root]) .a{width:20px}
  .b{display:flex;align-items:center;height:20px;background:#f1f1f1;padding:0 9px 0 3px;box-shadow:0 0 3px rgba(190,190,190,.4)}
  .b .e{margin-right:9px}.t{margin-left:14px;white-space:nowrap}
  :host([root]) .b{padding-right:8px}:host([root]) .e{margin-right:6px}
  .h{display:flex;align-items:center;height:16px}
  :host([root]) .h{background:#979797;padding:0 13px 0 3px;color:#fff;font-weight:700;margin-right:4px}`,
  (e) => `<button class="a" aria-label="Expand">${svg(e.hasAttribute('root') ? 'openarrow' : 'shutarrow')}</button><div class="b">${e.getAttribute('eye') ? `<button class="e" aria-label="Visibility">${svg(e.getAttribute('eye'))}</button>` : ''}<span class="h">${svg(e.getAttribute('icon'))}<span class="t"><slot></slot></span></span>${e.hasAttribute('root') ? svg('active') : ''}</div>`);

define('browser-panel', `:host{display:block}.r{display:flex;flex-direction:column;gap:4px;margin-top:5px}`,
  `<panel-head icon="minus">BROWSER</panel-head><div class="r">
   <tree-row root eye="eye" icon="component">Manufacturing Model 1</tree-row><tree-row icon="gear">Document Settings</tree-row><tree-row icon="folder">Named Views</tree-row><tree-row eye="eyeoff" icon="folder">Origin</tree-row><tree-row eye="eye" icon="folder">Sketches</tree-row><tree-row eye="eye" icon="component">(Unsaved):1</tree-row></div>`);

define('view-cube', `
  :host{display:block;width:70px;height:80px;font:700 12px/14px Roboto,sans-serif}
  .c{position:absolute;left:6px;top:17px;width:53px;height:53px;background:rgba(240,240,240,.85);border:1px solid #aaa;box-shadow:0 1px 5px rgba(0,0,0,.25);display:flex;align-items:center;justify-content:center}
  .f{width:33px;height:33px;background:#e5e7e9;color:#8f969d}
  i{position:absolute;font-style:normal;font-weight:500;font-size:13px}
  .y{left:6px;top:3px;color:#8dff8d}.z{left:-1px;top:65px;color:#7676ff}.x{left:62px;top:58px;color:#ff6464}`,
  `<div class="c"><button class="f">TOP</button></div><i class="y">Y</i><i class="z">Z</i><i class="x">X</i>`);

define('nav-bar', `
  :host{display:flex;align-items:center;height:24px;background:#f1f1f1;padding:0 2px 0 4px}
  button{gap:5px;margin-right:10px}button.s{margin-right:5px}button:last-child{margin:0}`,
  () => [['orbit', 1], ['look', 0], ['hand', 0], ['zoom', 0], ['zoomwin', 1], ['display', 1], ['grid', 1], ['views', 1]].map(([n, d]) => `<button ${d ? 'class="s"' : ''} aria-label="${n}">${svg(n)}${d ? svg('downk') : ''}</button>`).join(''));

define('time-line', `
  :host{display:flex;height:50px;background:#f1f1f1;border-top:1px solid #d4d4d4;padding:0 13px 0 11px;box-sizing:border-box}
  .p{display:flex;gap:13px;align-items:center;width:135px}
  .f{display:flex;gap:8px;padding-top:15px;position:relative;height:42px}
  .f button{width:16px;height:17px}
  .k{position:absolute;left:8px;right:8px;top:34px;height:7px;border:solid #c9c9c9;border-width:0 2px 2px;background:repeating-linear-gradient(90deg,transparent 0 21px,#c9c9c9 21px 23px,transparent 23px 24px)}
  .m{padding-top:9px;margin-left:-2px;z-index:1}.s{flex:1}`,
  () => `<div class="p">${['first', 'back', 'play', 'fwd', 'last'].map((n) => `<button aria-label="${n}">${svg(n)}</button>`).join('')}</div>
   <div class="f"><div class="k"></div>${['feature', 'feature', 'feature', 'feature', 'arrange', 'editsk', 'offset', 'extr'].map((n) => `<button aria-label="${n}">${svg(n)}</button>`).join('')}</div><div class="m">${svg('marker')}</div><div class="s"></div><button aria-label="Settings">${svg('gear')}</button>`);

define('task-bar', `
  :host{display:flex;height:40px;background:linear-gradient(90deg,#203640,#1d3040 50%,#1a2742);color:#fff;font:11px/18px "Open Sans","Noto Sans",sans-serif}
  .start{width:48px}
  .s{display:flex;align-items:center;width:344px;background:#f1f1f1;border:1px solid #bdbdbd;padding-left:11px}
  input{flex:1;min-width:0;margin-left:11px;background:none;border:0;padding:1px 0 0;font:14px/20px "Open Sans","Noto Sans",sans-serif;color:#222;outline:0}
  input::placeholder{color:#222;opacity:1}
  .a{display:flex;gap:1px}.a button{width:48px;position:relative}.a button:first-child{margin-right:2px}
  .a .on{background:#4b6169}.a .al{background:#a86a33}
  .u::after{content:"";position:absolute;left:4px;right:4px;bottom:0;height:2px;background:#76b9ed}
  .on::after{left:0;right:0}.al::after{left:0;right:0;background:#ff6d00}
  .sp{flex:1}.t{display:flex;align-items:center}.t .i{width:24px}.t .i:nth-child(5){width:32px}
  .c{display:flex;flex-direction:column;align-items:center;margin:0 20px 0 8px}
  .n{position:relative;width:24px;height:38px;justify-content:flex-start}
  .n b{position:absolute;left:7px;top:18px;width:17px;height:17px;border-radius:50%;border:1px solid #888;background:#2c3440;font-weight:400;line-height:15px;text-align:center}
  .e{width:5px;margin-left:12px;border-left:1px solid #6d7789}`,
  () => `<button class="start" aria-label="Start">${svg('win')}</button>
   <label class="s">${svg('search')}<input aria-label="Search" placeholder="Type here to search">${svg('books')}</label>
   <div class="a"><button aria-label="Task view">${svg('taskview')}</button><button aria-label="Explorer">${svg('explorer')}</button><button class="u" aria-label="Chrome">${svg('chromea')}</button><button class="u on" aria-label="Fusion">${svg('fusionbig')}</button><button class="u al" aria-label="Files">${svg('odfolder')}</button><button class="u" aria-label="Chrome">${svg('chromeb')}</button></div><div class="sp"></div>
   <div class="t">${['chev', 'cloud', 'net', 'sound', 'pen'].map((n) => `<button class="i" aria-label="${n}">${svg(n)}</button>`).join('')}<div class="c"><span>10:26 AM</span><span>6/6/2023</span></div><button class="n" aria-label="5 notifications">${svg('note')}<b>5</b></button></div><div class="e"></div>`);

define('fusion-app', ':host{display:flex;flex-direction:column;height:100vh}',
  `<title-bar>Autodesk Fusion 360 (Education License)</title-bar><tab-bar>Untitled*</tab-bar><tool-ribbon></tool-ribbon><model-canvas></model-canvas><time-line></time-line><task-bar></task-bar>`);
</script>
</body>
</html>
